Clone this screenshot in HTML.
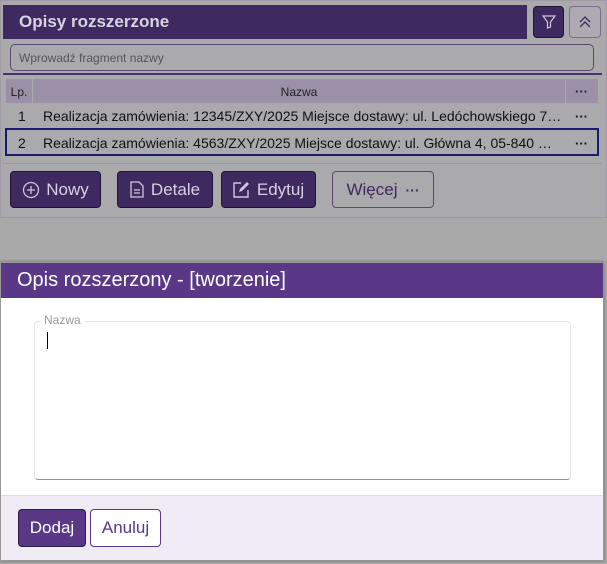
<!DOCTYPE html>
<html><head><meta charset="utf-8"><style>
*{box-sizing:border-box;margin:0;padding:0}
body{width:607px;height:564px;background:#a9a9a9;font-family:"Liberation Sans",sans-serif;position:relative;overflow:hidden}
.a{position:absolute}
.btn{position:absolute;border-radius:4px;display:flex;align-items:center;justify-content:center;font-size:17px}
.dk{background:#3e2a60;border:1px solid #1e1530;color:#d8d0e2}
.dots{position:absolute;font-weight:bold;font-size:13px;line-height:13px}
</style></head><body>
<div class="a" style="left:0;top:0;width:607px;height:218px;background:#aaa9ac;border:1px solid #9f9aa6"></div>
<div class="a" style="left:3px;top:5px;width:524px;height:34px;background:#3e2a60;color:#d8d3e0;font-weight:bold;font-size:17px;padding:7px 0 0 16px">Opisy rozszerzone</div>
<div class="btn dk" style="left:533px;top:6px;width:31px;height:32px"><svg width="14" height="14" viewBox="0 0 14 14"><path d="M1 1h12L8.5 7v5L5.5 13V7z" fill="none" stroke="#cfc8da" stroke-width="1.2"/></svg></div>
<div class="btn" style="left:569px;top:6px;width:32px;height:32px;border:1px solid #7a6b8f;background:#aeaab2"><svg width="14" height="14" viewBox="0 0 14 14"><path d="M2 7l5-5 5 5M2 12l5-5 5 5" fill="none" stroke="#3e2a60" stroke-width="1.3"/></svg></div>
<div class="a" style="left:10px;top:44px;width:584px;height:27px;border:1px solid #5a4a72;border-radius:5px;font-size:12px;color:#555;padding:6px 0 0 8px">Wprowadź fragment nazwy</div>
<div class="a" style="left:3px;top:73px;width:599px;height:2px;background:#4a3270"></div>
<div class="a" style="left:6px;top:79px;width:26px;height:24px;background:#9b90a8;font-size:12px;color:#222;text-align:center;padding-top:6px">Lp.</div>
<div class="a" style="left:33px;top:79px;width:532px;height:24px;background:#9b90a8;font-size:12px;color:#222;text-align:center;padding-top:6px">Nazwa</div>
<div class="a" style="left:566px;top:79px;width:32px;height:24px;background:#9b90a8;color:#222"><span class="dots" style="left:9px;top:6px">···</span></div>
<div class="a" style="left:6px;top:103px;width:592px;height:25px;font-size:14px;color:#111;white-space:nowrap">
<span class="a" style="left:12px;top:5px">1</span><span class="a" style="left:37px;top:5px">Realizacja zamówienia: 12345/ZXY/2025 Miejsce dostawy: ul. Ledóchowskiego 7…</span><span class="dots" style="left:569px;top:7px">···</span></div>
<div class="a" style="left:5px;top:128px;width:594px;height:28px;border:2px solid #1c1a70;font-size:14px;color:#111;white-space:nowrap">
<span class="a" style="left:11px;top:5px">2</span><span class="a" style="left:36px;top:5px">Realizacja zamówienia: 4563/ZXY/2025 Miejsce dostawy: ul. Główna 4, 05-840 …</span><span class="dots" style="left:568px;top:7px">···</span></div>
<div class="a" style="left:3px;top:163px;width:599px;height:1px;background:#9a96a0"></div>
<div class="btn dk" style="left:10px;top:171px;width:91px;height:37px"><svg width="18" height="18" viewBox="0 0 18 18" style="margin-right:6px"><circle cx="9" cy="9" r="7.5" fill="none" stroke="#cfc8da" stroke-width="1.3"/><path d="M9 5v8M5 9h8" stroke="#cfc8da" stroke-width="1.3"/></svg>Nowy</div>
<div class="btn dk" style="left:117px;top:171px;width:96px;height:37px"><svg width="14" height="17" viewBox="0 0 14 17" style="margin-right:7px"><path d="M1 1h8l4 4v11H1z" fill="none" stroke="#cfc8da" stroke-width="1.3"/><path d="M4 9h6M4 12h6" stroke="#cfc8da" stroke-width="1.2"/></svg>Detale</div>
<div class="btn dk" style="left:221px;top:171px;width:95px;height:37px"><svg width="17" height="17" viewBox="0 0 17 17" style="margin-right:7px"><path d="M8 2H1v14h14V9" fill="none" stroke="#cfc8da" stroke-width="1.4"/><path d="M6 11l1-3 7-7 2 2-7 7z" fill="#cfc8da"/></svg>Edytuj</div>
<div class="btn" style="left:332px;top:171px;width:102px;height:37px;border:1px solid #5a4a72;color:#3e2a60">Więcej <b style="margin-left:8px;font-size:14px">···</b></div>
<div class="a" style="left:0;top:262px;width:604px;height:299px;background:#fff;border:1px solid #999;box-shadow:0 0 3px rgba(0,0,0,.4)"></div>
<div class="a" style="left:1px;top:263px;width:602px;height:35px;background:#5a3787;color:#fff;font-size:20px;padding:6px 0 0 16px">Opis rozszerzony - [tworzenie]</div>
<div class="a" style="left:34px;top:321px;width:537px;height:159px;border:1px solid #e6e2ec;border-bottom:1px solid #9a8ab0;border-radius:4px"></div>
<div class="a" style="left:40px;top:313px;background:#fff;padding:0 4px;font-size:12px;color:#999">Nazwa</div>
<div class="a" style="left:47px;top:332px;width:1px;height:17px;background:#000"></div>
<div class="a" style="left:1px;top:495px;width:602px;height:65px;background:#f0ecf6;border-top:1px solid #e0dbe8"></div>
<div class="btn" style="left:18px;top:509px;width:68px;height:38px;background:#5a3787;border:1px solid #2a1a40;color:#fff">Dodaj</div>
<div class="btn" style="left:90px;top:509px;width:71px;height:38px;border:1px solid #5a3787;color:#5a3787;background:#fff">Anuluj</div>
</body></html>
